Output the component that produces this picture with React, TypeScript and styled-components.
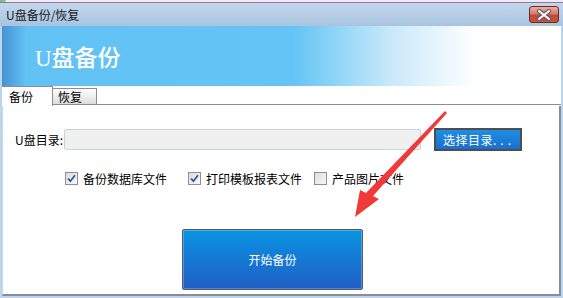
import React from 'react';
import styled, { createGlobalStyle } from 'styled-components';

const GlobalStyle = createGlobalStyle`
  html, body {
    margin: 0;
    padding: 0;
    background: #ffffff;
  }
  body {
    font-family: "Noto Sans CJK SC", "Liberation Sans", sans-serif;
    font-size: 12px;
    color: #000;
  }
`;

const Window = styled.div`
  position: relative;
  width: 563px;
  height: 298px;
  background: #bcd4ec;
  display: flex;
  flex-direction: column;
  overflow: hidden;
`;

const TopStrip = styled.div`
  height: 2px;
  background: linear-gradient(to right, #7fc37a 0px, #7fc37a 5px, #f6eaf4 6px, #f6eaf4 100%);
  border-bottom: 1px solid #8f7aa0;
`;

const TitleBar = styled.div`
  height: 23px;
  display: flex;
  align-items: center;
  justify-content: space-between;
  padding: 0 4px 0 6px;
  background: linear-gradient(to bottom, #c2d7ec, #a9c4e0);
`;

const TitleText = styled.span`
  font-size: 12px;
  line-height: 14px;
  color: #1a1a1a;
`;

const CloseButton = styled.button`
  width: 30px;
  height: 17px;
  padding: 0;
  display: flex;
  align-items: center;
  justify-content: center;
  border: 1px solid #6b2a2a;
  border-radius: 3px;
  background: linear-gradient(to bottom, #eab0a4 0%, #d87a68 45%, #c24a33 55%, #c9553c 100%);
`;

const Client = styled.div`
  flex: 1;
  margin: 0 2px 2px 2px;
  background: #ffffff;
  display: flex;
  flex-direction: column;
`;

const Banner = styled.div`
  height: 60px;
  display: flex;
  align-items: center;
  padding-left: 33px;
  background: linear-gradient(to right, #4692d4 0px, #62c2f4 24px, #63c4f5 290px, #c9e9fa 390px, #f3fafe 455px, #ffffff 475px);
`;

const BannerTitle = styled.h1`
  margin: 0;
  font-family: "Liberation Serif", "Noto Sans CJK SC", serif;
  font-size: 23px;
  font-weight: 500;
  color: #ffffff;
`;

const TabRow = styled.div`
  height: 20px;
  display: flex;
  align-items: flex-end;
`;

const Tab = styled.div<{ active?: boolean }>`
  box-sizing: border-box;
  height: ${(p) => (p.active ? '20px' : '17px')};
  width: ${(p) => (p.active ? '51px' : '44px')};
  padding-left: ${(p) => (p.active ? '7px' : '5px')};
  display: flex;
  align-items: center;
  font-size: 12px;
  border-top: 1px solid #8c8c98;
  border-right: 1px solid #8c8c98;
  border-bottom: ${(p) => (p.active ? 'none' : '1px solid #8c8c98')};
  background: ${(p) => (p.active ? '#ffffff' : 'linear-gradient(to bottom, #ffffff, #dcdcdc)')};
  margin-bottom: ${(p) => (p.active ? '0' : '1px')};
`;

const TabFill = styled.div`
  flex: 1;
  align-self: stretch;
  border-bottom: 1px solid #8c8c98;
  margin-bottom: 1px;
`;

const Panel = styled.div`
  flex: 1;
  border-right: 2px solid #8c8c96;
  border-bottom: 2px solid #8c8c96;
  border-left: 1px solid #c8d6e6;
  display: flex;
  flex-direction: column;
  padding-top: 22px;
`;

const PathRow = styled.div`
  display: flex;
  align-items: center;
  height: 23px;
  padding-left: 12px;
`;

const Label = styled.span`
  width: 49px;
  font-size: 12px;
`;

const PathInput = styled.div`
  box-sizing: border-box;
  width: 357px;
  height: 21px;
  background: #f0f0f0;
  border: 1px solid #c6d4e2;
  border-radius: 2px;
`;

const BrowseButton = styled.button`
  box-sizing: border-box;
  margin-left: 13px;
  width: 88px;
  height: 23px;
  padding: 0 0 0 7px;
  text-align: left;
  border: 2px solid #4e4e4e;
  background: linear-gradient(to bottom, #1e8ee2, #1a6fd0);
  color: #ffffff;
  font-family: inherit;
  font-size: 12px;
  letter-spacing: 0.5px;
`;

const Dots = styled.span`
  letter-spacing: 4px;
`;

const OptionRow = styled.div`
  display: flex;
  align-items: center;
  margin-top: 19px;
  padding-left: 62px;
`;

const Option = styled.label<{ w: number }>`
  width: ${(p) => p.w}px;
  display: flex;
  align-items: center;
  gap: 5px;
  font-size: 12px;
  white-space: nowrap;
`;

const Box = styled.span`
  box-sizing: border-box;
  flex: none;
  width: 13px;
  height: 13px;
  border: 1px solid #8e8f8f;
  background: linear-gradient(135deg, #dcdcdc, #f8f8f8);
  display: flex;
  align-items: center;
  justify-content: center;
`;

const StartRow = styled.div`
  margin-top: 42px;
  padding-left: 179px;
`;

const StartButton = styled.button`
  box-sizing: border-box;
  width: 181px;
  height: 61px;
  border: 1px solid #555a60;
  border-radius: 2px;
  background: linear-gradient(to bottom, #0a93e2, #1f5fc6);
  box-shadow: inset 0 0 0 1px rgba(255, 255, 255, 0.25);
  color: #ffffff;
  font-family: inherit;
  font-size: 12px;
`;

const ArrowLayer = styled.svg`
  position: absolute;
  left: 0;
  top: 0;
  pointer-events: none;
`;

const Checkbox = ({ checked, label, w }: { checked?: boolean; label: string; w: number }) => (
  <Option w={w}>
    <Box>
      {checked ? (
        <svg width="9" height="9" viewBox="0 0 9 9">
          <path d="M1 4.5 L3.4 7.2 L8 1.3" fill="none" stroke="#2b53a8" strokeWidth="1.8" />
        </svg>
      ) : null}
    </Box>
    {label}
  </Option>
);

const App = () => (
  <>
    <GlobalStyle />
    <Window>
      <TopStrip />
      <TitleBar>
        <TitleText>U盘备份/恢复</TitleText>
        <CloseButton aria-label="close">
          <svg width="16" height="12" viewBox="0 0 16 12">
            <path d="M3 2 L13 10 M13 2 L3 10" stroke="#5a5a66" strokeWidth="4.2" strokeLinecap="round" />
            <path d="M3 2 L13 10 M13 2 L3 10" stroke="#ffffff" strokeWidth="2.2" strokeLinecap="round" />
          </svg>
        </CloseButton>
      </TitleBar>
      <Client>
        <Banner>
          <BannerTitle>U盘备份</BannerTitle>
        </Banner>
        <TabRow>
          <Tab active>备份</Tab>
          <Tab>恢复</Tab>
          <TabFill />
        </TabRow>
        <Panel>
          <PathRow>
            <Label>U盘目录:</Label>
            <PathInput />
            <BrowseButton>
              选择目录<Dots>...</Dots>
            </BrowseButton>
          </PathRow>
          <OptionRow>
            <Checkbox checked w={123} label="备份数据库文件" />
            <Checkbox checked w={126} label="打印模板报表文件" />
            <Checkbox w={100} label="产品图片文件" />
          </OptionRow>
          <StartRow>
            <StartButton>开始备份</StartButton>
          </StartRow>
        </Panel>
      </Client>
      <ArrowLayer width="563" height="298" viewBox="0 0 563 298">
        <polygon
          points="445,111 447,113 373,196 379,199 355,217 360,190 366,193"
          fill="#f03a3a"
        />
      </ArrowLayer>
    </Window>
  </>
);

export default App;
